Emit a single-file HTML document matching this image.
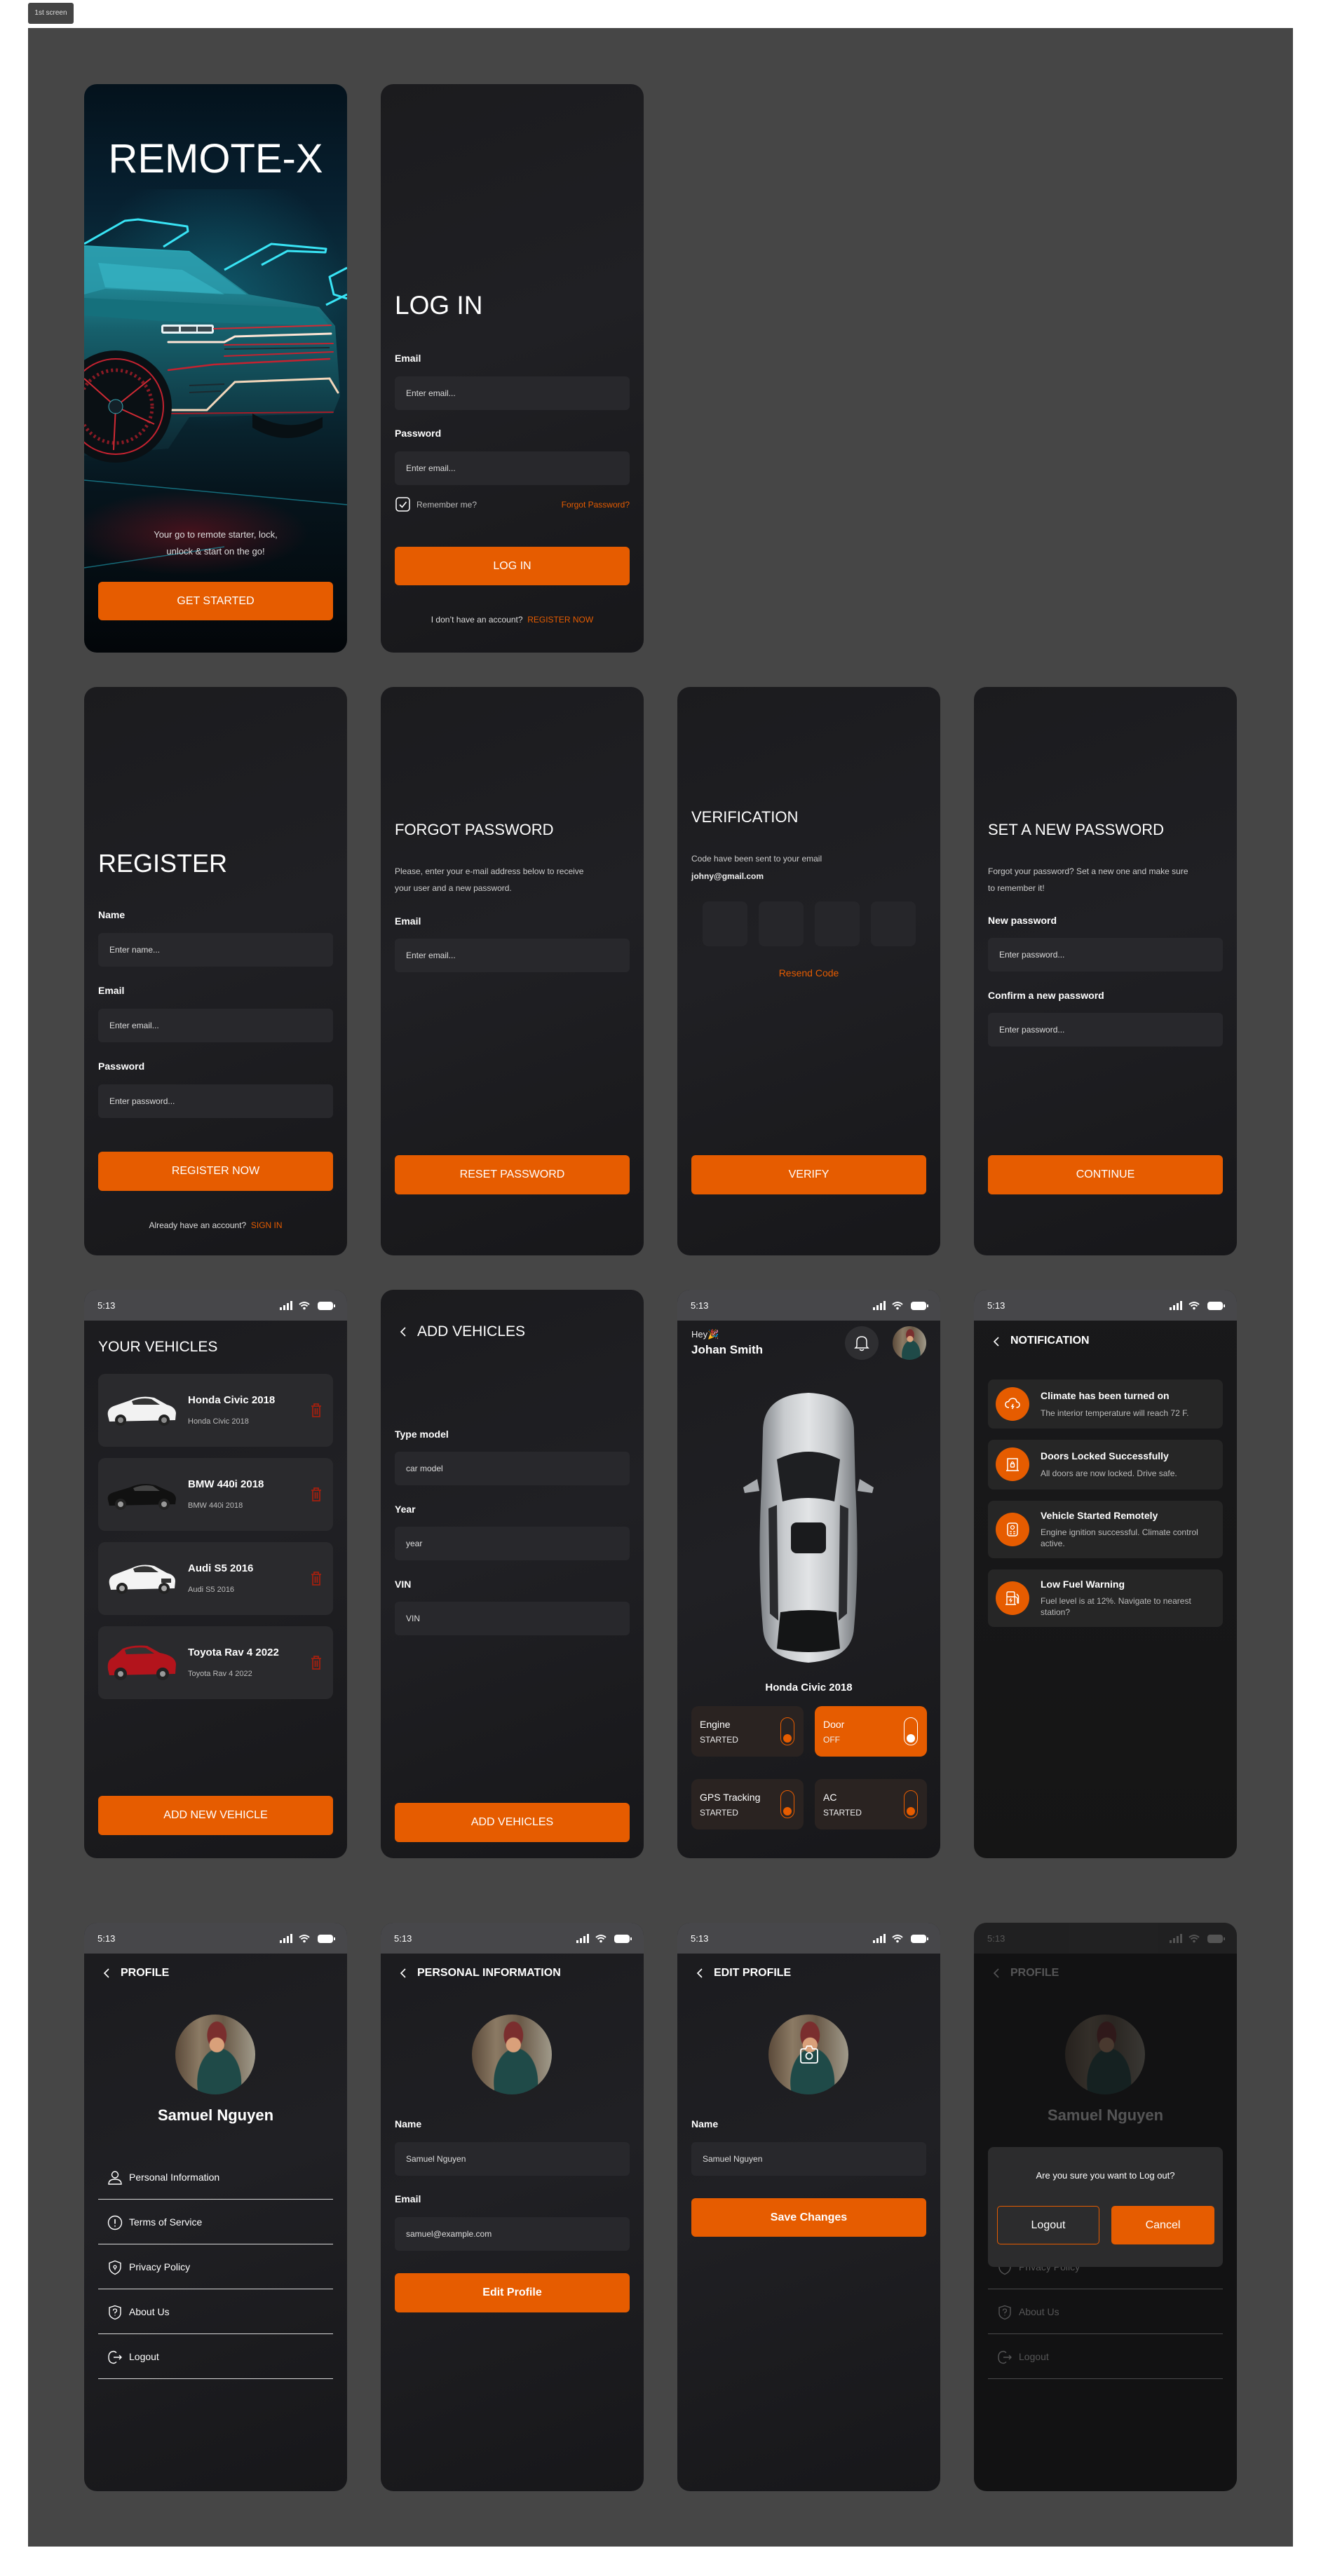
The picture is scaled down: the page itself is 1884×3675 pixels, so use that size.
<!DOCTYPE html>
<html><head><meta charset="utf-8">
<style>
*{margin:0;padding:0;box-sizing:border-box}
body{width:1884px;height:3675px;background:#fff;font-family:"Liberation Sans",Arial,sans-serif;position:relative;overflow:hidden}
#bg{position:absolute;left:40px;top:40px;width:1804px;height:3593px;background:#464646}
#lbl{position:absolute;left:40px;top:4px;width:65px;height:30px;background:#444;border-radius:3px;color:#ddd;font-size:10px;line-height:30px;text-align:center}
.ph{position:absolute;width:375px;height:811px;border-radius:18px;overflow:hidden;background:linear-gradient(160deg,#1b1b1e 0%,#202024 45%,#1b1b1e 75%,#17171a 100%);color:#fff}
.t{position:absolute;white-space:nowrap;line-height:1}
.lb{position:absolute;left:20px;font-size:14px;font-weight:bold;color:#fff;line-height:1}
.in{position:absolute;left:20px;width:335px;height:48px;background:#28282c;border-radius:6px;color:#ddd;font-size:12px;line-height:48px;padding-left:16px}
.bt{position:absolute;left:20px;width:335px;height:56px;background:#e65c00;border-radius:6px;color:#fff;font-size:16px;text-align:center;line-height:56px}
.sb{position:absolute;left:0;top:0;width:375px;height:44px;background:#47474a}
.sb .tm{position:absolute;left:19px;top:16px;font-size:13px;color:#fff}
.sb svg{position:absolute;left:276px;top:14px}
.card{position:absolute;left:20px;width:335px;height:104px;background:#2a2a2d;border-radius:10px}
.card .n{position:absolute;left:128px;top:30px;font-size:15px;font-weight:bold;color:#fff}
.card .s{position:absolute;left:128px;top:63px;font-size:11px;color:#bbb}
.card svg.tr{position:absolute;left:302px;top:41px}
.card svg.car{position:absolute;left:10px;top:22px}
.tile{position:absolute;width:160px;height:72px;border-radius:10px;background:#2a2321}
.tile .a{position:absolute;left:12px;top:19px;font-size:14px;color:#fff}
.tile .b{position:absolute;left:12px;top:42px;font-size:12px;color:#eee}
.tile .tg{position:absolute;left:127px;top:16px;width:20px;height:40px;border:1.5px solid #e65c00;border-radius:10px}
.tile .tg i{position:absolute;left:2.5px;bottom:3px;width:12px;height:12px;border-radius:50%;background:#e65c00}
.nc{position:absolute;left:20px;width:335px;background:#262626;border-radius:8px}
.nc .ic{position:absolute;left:11px;width:48px;height:48px;border-radius:50%;background:#e65c00}
.nc .ic svg{position:absolute;left:12px;top:12px}
.nc .h{position:absolute;left:75px;font-size:14px;color:#fff;font-weight:bold}
.nc .d{position:absolute;left:75px;font-size:12px;color:#bbb;line-height:16px;white-space:normal;width:255px}
.av{position:absolute;width:114px;height:114px;border-radius:50%;overflow:hidden;background:radial-gradient(circle at 52% 38%,#d9a07a 0 11%,transparent 12%),radial-gradient(ellipse at 52% 26%,#7a2e2e 0 16%,transparent 17%),radial-gradient(ellipse at 55% 85%,#1f4a48 0 35%,transparent 36%),linear-gradient(90deg,#5b4a3a,#8b7a64 30%,#6a5a48 60%,#a09a8a)}
.mi{position:absolute;left:20px;width:335px;height:64px;border-bottom:1px solid #d8d8d8}
.mi .x{position:absolute;left:44px;top:25px;font-size:14px;color:#fff}
.mi svg{position:absolute;left:13px;top:22px}
.hd{position:absolute;left:0;top:0;width:375px}
.hd svg{position:absolute;left:26px}
.hd .t{left:52px;font-size:16px;font-weight:bold}
</style></head><body>
<div id="lbl">1st screen</div>
<div id="bg"></div>

<!-- ROW 1 -->
<div class="ph" style="left:120px;top:120px;background:linear-gradient(180deg,#04121c 0%,#072030 20%,#0b3342 38%,#0a2a36 55%,#06141c 72%,#030609 100%)">
<svg width="375" height="811" style="position:absolute;left:0;top:0">
<defs>
<radialGradient id="gl" cx="50%" cy="40%" r="50%"><stop offset="0" stop-color="#1aa0b8" stop-opacity=".35"/><stop offset="1" stop-color="#1aa0b8" stop-opacity="0"/></radialGradient>
<linearGradient id="bd" x1="0" y1="0" x2="0" y2="1"><stop offset="0" stop-color="#2aa8b8"/><stop offset=".4" stop-color="#16606c"/><stop offset="1" stop-color="#0c2630"/></linearGradient>
<radialGradient id="rf" cx="50%" cy="50%" r="50%"><stop offset="0" stop-color="#7a1420" stop-opacity=".55"/><stop offset="1" stop-color="#7a1420" stop-opacity="0"/></radialGradient>
</defs>
<rect x="0" y="150" width="375" height="380" fill="url(#gl)"/>
<g fill="none" stroke="#39e4f5" stroke-width="3" stroke-linejoin="round">
<polyline points="0,228 58,195 77,193 147,203 148,210 113,232"/>
<polyline points="200,265 267,228 345,235 344,240 290,238 253,258"/>
<polyline points="375,262 350,275 356,300 375,306"/>
<polyline points="345,315 375,300"/>
</g>
<ellipse cx="150" cy="640" rx="170" ry="60" fill="url(#rf)"/>
<path d="M0,230 L150,238 L235,300 L335,318 L358,345 L365,445 L355,470 L150,475 L120,520 L0,530 Z" fill="url(#bd)"/>
<path d="M0,232 L150,240 L232,300 L30,292 L0,300 Z" fill="#2a9aaa" opacity=".85"/>
<path d="M20,255 L140,265 L200,300 L30,290Z" fill="#3cc0cf" opacity=".5"/>
<path d="M0,305 L330,320 L350,345 L110,338 L0,330Z" fill="#15707c"/>
<rect x="110" y="343" width="75" height="13" rx="3" fill="#e8f4f6"/>
<rect x="113" y="346" width="22" height="7" fill="#3a4a50"/><rect x="138" y="346" width="22" height="7" fill="#3a4a50"/><rect x="162" y="346" width="20" height="7" fill="#3a4a50"/>
<g fill="none" stroke-linecap="round">
<path d="M120,368 L200,368 L215,360 L352,356" stroke="#ffe6d6" stroke-width="3"/>
<path d="M185,349 L352,344" stroke="#d12a34" stroke-width="2"/>
<path d="M200,372 L355,370" stroke="#c42230" stroke-width="2"/>
<path d="M200,388 L355,382" stroke="#c42230" stroke-width="2"/>
<path d="M120,408 L185,400 L350,392" stroke="#c42230" stroke-width="2.5"/>
<path d="M115,465 L175,465 L215,425 L350,420 L362,440" stroke="#f3d7bb" stroke-width="3"/>
<path d="M120,470 L355,468" stroke="#a51c28" stroke-width="2"/>
</g>
<g stroke="#1b2a30" stroke-width="2"><line x1="200" y1="378" x2="350" y2="376"/><line x1="150" y1="430" x2="200" y2="428"/><line x1="150" y1="440" x2="195" y2="438"/></g>
<path d="M240,470 Q290,500 340,475 L340,490 Q290,520 240,490Z" fill="#081014"/>
<circle cx="45" cy="460" r="80" fill="#0a1014"/>
<circle cx="45" cy="460" r="68" fill="none" stroke="#c42230" stroke-width="2"/>
<circle cx="45" cy="460" r="52" fill="none" stroke="#8a1a24" stroke-width="5" stroke-dasharray="3 4"/>
<g stroke="#d12a34" stroke-width="2"><line x1="45" y1="460" x2="95" y2="420"/><line x1="45" y1="460" x2="100" y2="485"/><line x1="45" y1="460" x2="42" y2="522"/><line x1="45" y1="460" x2="0" y2="420"/></g>
<circle cx="45" cy="460" r="10" fill="#132028" stroke="#39a9b8"/>
<g stroke="#1fa8bc" stroke-width="1.5" opacity=".6"><line x1="0" y1="565" x2="375" y2="600"/><line x1="0" y1="690" x2="200" y2="660"/></g>
</svg>
<div class="t" style="left:0;width:375px;text-align:center;top:78px;font-size:58px;font-weight:normal;color:#fff">REMOTE-X</div>
<div class="t" style="left:0;width:375px;text-align:center;top:636px;font-size:13px;color:#ddd">Your go to remote starter, lock,</div>
<div class="t" style="left:0;width:375px;text-align:center;top:660px;font-size:13px;color:#ddd">unlock &amp; start on the go!</div>
<div class="bt" style="top:710px;height:55px;line-height:55px">GET STARTED</div>
</div>

<div class="ph" style="left:543px;top:120px">
<div class="t" style="left:20px;top:297px;font-size:37px">LOG IN</div>
<div class="lb" style="top:384px">Email</div>
<div class="in" style="top:417px">Enter email...</div>
<div class="lb" style="top:491px">Password</div>
<div class="in" style="top:524px">Enter email...</div>
<svg width="22" height="22" style="position:absolute;left:21px;top:589px"><rect x="1" y="1" width="19" height="19" rx="4" fill="none" stroke="#fff" stroke-width="1.5"/><path d="M6,11 L9.5,14.5 L15.5,7" fill="none" stroke="#fff" stroke-width="1.6"/></svg>
<div class="t" style="left:51px;top:594px;font-size:12px;color:#bbb">Remember me?</div>
<div class="t" style="right:20px;top:594px;font-size:12px;color:#e65c00">Forgot Password?</div>
<div class="bt" style="top:660px;height:55px;line-height:55px">LOG IN</div>
<div class="t" style="left:0;width:375px;text-align:center;top:758px;font-size:12px;color:#ddd">I don’t have an account?&nbsp;&nbsp;<span style="color:#e65c00">REGISTER NOW</span></div>
</div>

<!-- ROW 2 -->
<div class="ph" style="left:120px;top:980px">
<div class="t" style="left:20px;top:234px;font-size:36px">REGISTER</div>
<div class="lb" style="top:318px">Name</div>
<div class="in" style="top:351px">Enter name...</div>
<div class="lb" style="top:426px">Email</div>
<div class="in" style="top:459px">Enter email...</div>
<div class="lb" style="top:534px">Password</div>
<div class="in" style="top:567px">Enter password...</div>
<div class="bt" style="top:663px">REGISTER NOW</div>
<div class="t" style="left:0;width:375px;text-align:center;top:762px;font-size:12px;color:#ddd">Already have an account?&nbsp;&nbsp;<span style="color:#e65c00">SIGN IN</span></div>
</div>

<div class="ph" style="left:543px;top:980px">
<div class="t" style="left:20px;top:193px;font-size:22px">FORGOT PASSWORD</div>
<div class="t" style="left:20px;top:257px;font-size:12px;color:#ccc">Please, enter your e-mail address below to receive</div>
<div class="t" style="left:20px;top:281px;font-size:12px;color:#ccc">your user and a new password.</div>
<div class="lb" style="top:327px">Email</div>
<div class="in" style="top:359px">Enter email...</div>
<div class="bt" style="top:668px">RESET PASSWORD</div>
</div>

<div class="ph" style="left:966px;top:980px">
<div class="t" style="left:20px;top:175px;font-size:22px">VERIFICATION</div>
<div class="t" style="left:20px;top:239px;font-size:12px;color:#ccc">Code have been sent to your email</div>
<div class="t" style="left:20px;top:264px;font-size:12px;color:#eee;font-weight:bold">johny@gmail.com</div>
<div style="position:absolute;left:36px;top:306px;width:64px;height:64px;border-radius:8px;background:#26262a"></div>
<div style="position:absolute;left:116px;top:306px;width:64px;height:64px;border-radius:8px;background:#26262a"></div>
<div style="position:absolute;left:196px;top:306px;width:64px;height:64px;border-radius:8px;background:#26262a"></div>
<div style="position:absolute;left:276px;top:306px;width:64px;height:64px;border-radius:8px;background:#26262a"></div>
<div class="t" style="left:0;width:375px;text-align:center;top:401px;font-size:14px;color:#e65c00">Resend Code</div>
<div class="bt" style="top:668px">VERIFY</div>
</div>

<div class="ph" style="left:1389px;top:980px">
<div class="t" style="left:20px;top:193px;font-size:22px">SET A NEW PASSWORD</div>
<div class="t" style="left:20px;top:257px;font-size:12px;color:#ccc">Forgot your password? Set a new one and make sure</div>
<div class="t" style="left:20px;top:281px;font-size:12px;color:#ccc">to remember it!</div>
<div class="lb" style="top:326px">New password</div>
<div class="in" style="top:358px">Enter password...</div>
<div class="lb" style="top:433px">Confirm a new password</div>
<div class="in" style="top:465px">Enter password...</div>
<div class="bt" style="top:668px">CONTINUE</div>
</div>

<!-- ROW 3 -->
<div class="ph" style="left:120px;top:1840px">
<div class="sb"><span class="t tm">5:13</span><svg width="82" height="18"><rect x="3" y="11" width="3" height="4" fill="#fff"/><rect x="8" y="8" width="3" height="7" fill="#fff"/><rect x="13" y="5" width="3" height="10" fill="#fff"/><rect x="18" y="2" width="3" height="13" fill="#fff"/><path d="M31,7 Q38,1 45,7 M33.5,9.5 Q38,5.5 42.5,9.5" fill="none" stroke="#fff" stroke-width="2"/><circle cx="38" cy="12.5" r="1.8" fill="#fff"/><rect x="57" y="3" width="22" height="12" rx="4" fill="#fff"/><rect x="80" y="7" width="2" height="4" fill="#fff"/></svg></div>
<div class="t" style="left:20px;top:71px;font-size:21px">YOUR VEHICLES</div>
<div class="card" style="top:120px"><svg class="car" width="105" height="60"><path d="M4,38 Q2,28 12,24 L35,16 Q50,8 70,12 L88,22 Q100,25 101,34 L100,44 L6,46Z" fill="#f2f2f2"/><path d="M38,17 Q52,11 66,14 L78,22 L40,22Z" fill="#333"/><circle cx="22" cy="44" r="8" fill="#222"/><circle cx="22" cy="44" r="4" fill="#888"/><circle cx="84" cy="44" r="8" fill="#222"/><circle cx="84" cy="44" r="4" fill="#888"/></svg><div class="t n">Honda Civic 2018</div><div class="t s">Honda Civic 2018</div><svg class="tr" width="18" height="22"><path d="M2,5 H16 M6,5 V2 H12 V5 M4,5 V20 H14 V5 M7.5,8 V17 M10.5,8 V17" fill="none" stroke="#a3200f" stroke-width="1.8"/></svg></div>
<div class="card" style="top:240px"><svg class="car" width="105" height="60"><path d="M4,38 Q2,30 12,27 L35,20 Q52,12 72,17 L90,25 Q100,28 101,36 L100,44 L6,46Z" fill="#111"/><path d="M40,21 Q54,15 68,18 L78,25 L42,25Z" fill="#444"/><circle cx="22" cy="44" r="8" fill="#222"/><circle cx="22" cy="44" r="4" fill="#999"/><circle cx="84" cy="44" r="8" fill="#222"/><circle cx="84" cy="44" r="4" fill="#999"/></svg><div class="t n">BMW 440i 2018</div><div class="t s">BMW 440i 2018</div><svg class="tr" width="18" height="22"><path d="M2,5 H16 M6,5 V2 H12 V5 M4,5 V20 H14 V5 M7.5,8 V17 M10.5,8 V17" fill="none" stroke="#a3200f" stroke-width="1.8"/></svg></div>
<div class="card" style="top:360px"><svg class="car" width="105" height="60"><path d="M6,38 Q4,28 14,24 L38,15 Q52,8 70,12 L88,22 Q100,25 100,34 L99,44 L8,46Z" fill="#f4f4f4"/><path d="M40,16 Q54,10 66,14 L76,21 L42,21Z" fill="#333"/><rect x="80" y="30" width="14" height="6" fill="#333"/><circle cx="24" cy="44" r="8" fill="#222"/><circle cx="24" cy="44" r="4" fill="#aaa"/><circle cx="84" cy="44" r="8" fill="#222"/><circle cx="84" cy="44" r="4" fill="#aaa"/></svg><div class="t n">Audi S5 2016</div><div class="t s">Audi S5 2016</div><svg class="tr" width="18" height="22"><path d="M2,5 H16 M6,5 V2 H12 V5 M4,5 V20 H14 V5 M7.5,8 V17 M10.5,8 V17" fill="none" stroke="#a3200f" stroke-width="1.8"/></svg></div>
<div class="card" style="top:480px"><svg class="car" width="105" height="60"><path d="M4,40 Q2,26 12,22 L25,10 Q40,4 60,6 L78,16 Q100,20 101,32 L100,46 L6,48Z" fill="#b3141c"/><path d="M28,12 Q42,7 58,9 L70,17 L30,18Z" fill="#333"/><circle cx="22" cy="46" r="9" fill="#222"/><circle cx="22" cy="46" r="4" fill="#999"/><circle cx="82" cy="46" r="9" fill="#222"/><circle cx="82" cy="46" r="4" fill="#999"/></svg><div class="t n">Toyota Rav 4 2022</div><div class="t s">Toyota Rav 4 2022</div><svg class="tr" width="18" height="22"><path d="M2,5 H16 M6,5 V2 H12 V5 M4,5 V20 H14 V5 M7.5,8 V17 M10.5,8 V17" fill="none" stroke="#a3200f" stroke-width="1.8"/></svg></div>
<div class="bt" style="top:722px">ADD NEW VEHICLE</div>
</div>

<div class="ph" style="left:543px;top:1840px">
<div class="hd"><svg width="12" height="16" style="top:52px"><path d="M9,2 L3,8 L9,14" fill="none" stroke="#fff" stroke-width="1.6"/></svg><div class="t" style="top:49px;font-size:21px;font-weight:normal">ADD VEHICLES</div></div>
<div class="lb" style="top:199px">Type model</div>
<div class="in" style="top:231px">car model</div>
<div class="lb" style="top:306px">Year</div>
<div class="in" style="top:338px">year</div>
<div class="lb" style="top:413px">VIN</div>
<div class="in" style="top:445px">VIN</div>
<div class="bt" style="top:732px">ADD VEHICLES</div>
</div>

<div class="ph" style="left:966px;top:1840px">
<div class="sb"><span class="t tm">5:13</span><svg width="82" height="18"><rect x="3" y="11" width="3" height="4" fill="#fff"/><rect x="8" y="8" width="3" height="7" fill="#fff"/><rect x="13" y="5" width="3" height="10" fill="#fff"/><rect x="18" y="2" width="3" height="13" fill="#fff"/><path d="M31,7 Q38,1 45,7 M33.5,9.5 Q38,5.5 42.5,9.5" fill="none" stroke="#fff" stroke-width="2"/><circle cx="38" cy="12.5" r="1.8" fill="#fff"/><rect x="57" y="3" width="22" height="12" rx="4" fill="#fff"/><rect x="80" y="7" width="2" height="4" fill="#fff"/></svg></div>
<div class="t" style="left:20px;top:57px;font-size:13px;color:#eee">Hey🎉</div>
<div class="t" style="left:20px;top:77px;font-size:17px;font-weight:bold">Johan Smith</div>
<div style="position:absolute;left:239px;top:52px;width:48px;height:48px;border-radius:50%;background:#2e2e31"></div>
<svg width="22" height="24" style="position:absolute;left:252px;top:64px"><path d="M4,17 V10 Q4,3 11,3 Q18,3 18,10 V17 L20,19 H2Z M8,21 Q11,24 14,21" fill="none" stroke="#fff" stroke-width="1.5"/></svg>
<div class="av" style="left:307px;top:52px;width:48px;height:48px"></div>
<svg width="190" height="395" style="position:absolute;left:92px;top:142px">
<defs><linearGradient id="sv" x1="0" x2="1"><stop offset="0" stop-color="#7d8186"/><stop offset=".25" stop-color="#c8cbce"/><stop offset=".5" stop-color="#e2e4e6"/><stop offset=".75" stop-color="#c3c6c9"/><stop offset="1" stop-color="#74787c"/></linearGradient></defs>
<path d="M30,60 Q30,8 95,5 Q160,8 160,60 L162,140 Q168,250 160,340 Q158,385 95,390 Q32,385 30,340 Q22,250 28,140Z" fill="url(#sv)"/>
<path d="M2,140 L22,128 L25,145 L4,148Z M188,140 L168,128 L165,145 L186,148Z" fill="#a7aaae"/>
<path d="M50,100 Q95,78 140,100 L132,160 Q95,150 58,160Z" fill="#1e1f22"/>
<rect x="70" y="190" width="50" height="44" rx="8" fill="#1a1b1d"/>
<path d="M38,170 L50,165 L52,330 L40,320Z M152,170 L140,165 L138,330 L150,320Z" fill="#2a2b2e"/>
<path d="M55,318 Q95,312 135,318 L140,370 Q95,380 50,370Z" fill="#141516"/>
</svg>
<div class="t" style="left:0;width:375px;text-align:center;top:560px;font-size:15px;font-weight:bold">Honda Civic 2018</div>
<div class="tile" style="left:20px;top:594px"><div class="t a">Engine</div><div class="t b">STARTED</div><div class="tg"><i></i></div></div>
<div class="tile" style="left:196px;top:594px;background:#e65c00"><div class="t a">Door</div><div class="t b">OFF</div><div class="tg" style="border-color:#fff"><i style="background:#fff"></i></div></div>
<div class="tile" style="left:20px;top:698px"><div class="t a">GPS Tracking</div><div class="t b">STARTED</div><div class="tg"><i></i></div></div>
<div class="tile" style="left:196px;top:698px"><div class="t a">AC</div><div class="t b">STARTED</div><div class="tg"><i></i></div></div>
</div>

<div class="ph" style="left:1389px;top:1840px;background:linear-gradient(180deg,#19191b,#151515)">
<div class="sb"><span class="t tm">5:13</span><svg width="82" height="18"><rect x="3" y="11" width="3" height="4" fill="#fff"/><rect x="8" y="8" width="3" height="7" fill="#fff"/><rect x="13" y="5" width="3" height="10" fill="#fff"/><rect x="18" y="2" width="3" height="13" fill="#fff"/><path d="M31,7 Q38,1 45,7 M33.5,9.5 Q38,5.5 42.5,9.5" fill="none" stroke="#fff" stroke-width="2"/><circle cx="38" cy="12.5" r="1.8" fill="#fff"/><rect x="57" y="3" width="22" height="12" rx="4" fill="#fff"/><rect x="80" y="7" width="2" height="4" fill="#fff"/></svg></div>
<div class="hd"><svg width="12" height="16" style="top:66px"><path d="M9,2 L3,8 L9,14" fill="none" stroke="#fff" stroke-width="1.6"/></svg><div class="t" style="top:65px">NOTIFICATION</div></div>
<div class="nc" style="top:128px;height:70px"><div class="ic" style="top:11px"><svg width="24" height="24"><path d="M7,17 Q2,17 2,12.5 Q2,8.5 6.5,8.5 Q8,4 12.5,4 Q17.5,4 18,9 Q22,9.5 22,13 Q22,17 17.5,17 M13,12 L11,15.5 H13.5 L11.5,19" fill="none" stroke="#fff" stroke-width="1.5"/></svg></div><div class="t h" style="top:16px">Climate has been turned on</div><div class="t d" style="top:40px">The interior temperature will reach 72 F.</div></div>
<div class="nc" style="top:214px;height:71px"><div class="ic" style="top:11px"><svg width="24" height="24"><path d="M5,21 V4 H19 V21 M3,21 H21" fill="none" stroke="#fff" stroke-width="1.5"/><rect x="9.5" y="11" width="5" height="5" rx="1" fill="none" stroke="#fff" stroke-width="1.4"/><path d="M10.5,11 V9.5 Q12,7.5 13.5,9.5 V11" fill="none" stroke="#fff" stroke-width="1.3"/></svg></div><div class="t h" style="top:16px">Doors Locked Successfully</div><div class="t d" style="top:40px">All doors are now locked. Drive safe.</div></div>
<div class="nc" style="top:301px;height:82px"><div class="ic" style="top:17px"><svg width="24" height="24"><rect x="5" y="3" width="14" height="18" rx="3" fill="none" stroke="#fff" stroke-width="1.5"/><circle cx="12" cy="9" r="2.5" fill="none" stroke="#fff" stroke-width="1.3"/><path d="M8,15 H11 M13,15 H16 M8,18 H11 M13,18 H16" stroke="#fff" stroke-width="1.3"/></svg></div><div class="t h" style="top:14px">Vehicle Started Remotely</div><div class="t d" style="top:37px">Engine ignition successful. Climate control active.</div></div>
<div class="nc" style="top:399px;height:82px"><div class="ic" style="top:17px"><svg width="24" height="24"><path d="M4,21 V5 Q4,3 6,3 H13 Q15,3 15,5 V21 M2,21 H17 M15,9 L19,12 V18 Q19,19.5 20.5,19 V9 L18,6 M4,10 H15" fill="none" stroke="#fff" stroke-width="1.4"/><path d="M10,12 L8,15 H11 L9,18" fill="none" stroke="#fff" stroke-width="1.2"/></svg></div><div class="t h" style="top:14px">Low Fuel Warning</div><div class="t d" style="top:37px">Fuel level is at 12%. Navigate to nearest station?</div></div>
</div>

<!-- ROW 4 -->
<div class="ph" style="left:120px;top:2743px">
<div class="sb"><span class="t tm">5:13</span><svg width="82" height="18"><rect x="3" y="11" width="3" height="4" fill="#fff"/><rect x="8" y="8" width="3" height="7" fill="#fff"/><rect x="13" y="5" width="3" height="10" fill="#fff"/><rect x="18" y="2" width="3" height="13" fill="#fff"/><path d="M31,7 Q38,1 45,7 M33.5,9.5 Q38,5.5 42.5,9.5" fill="none" stroke="#fff" stroke-width="2"/><circle cx="38" cy="12.5" r="1.8" fill="#fff"/><rect x="57" y="3" width="22" height="12" rx="4" fill="#fff"/><rect x="80" y="7" width="2" height="4" fill="#fff"/></svg></div>
<div class="hd"><svg width="12" height="16" style="top:64px"><path d="M9,2 L3,8 L9,14" fill="none" stroke="#fff" stroke-width="1.6"/></svg><div class="t" style="top:64px">PROFILE</div></div>
<div class="av" style="left:130px;top:131px"></div>
<div class="t" style="left:0;width:375px;text-align:center;top:264px;font-size:22px;font-weight:bold">Samuel Nguyen</div>
<div class="mi" style="top:331px"><svg width="22" height="22"><circle cx="11" cy="6.5" r="4.5" fill="none" stroke="#fff" stroke-width="1.4"/><path d="M2,20 Q2,13 11,13 Q20,13 20,20Z" fill="none" stroke="#fff" stroke-width="1.4"/></svg><div class="t x">Personal Information</div></div>
<div class="mi" style="top:395px"><svg width="22" height="22"><circle cx="11" cy="11" r="9.5" fill="none" stroke="#fff" stroke-width="1.4"/><path d="M11,6 V12.5 M11,15 V16.5" stroke="#fff" stroke-width="1.6"/></svg><div class="t x">Terms of Service</div></div>
<div class="mi" style="top:459px"><svg width="22" height="22"><path d="M11,1.5 L19,4.5 V10 Q19,17 11,20.5 Q3,17 3,10 V4.5Z" fill="none" stroke="#fff" stroke-width="1.4"/><circle cx="11" cy="10" r="2" fill="none" stroke="#fff" stroke-width="1.3"/><path d="M11,12 V14.5" stroke="#fff" stroke-width="1.3"/></svg><div class="t x">Privacy Policy</div></div>
<div class="mi" style="top:523px"><svg width="22" height="22"><path d="M11,1.5 L19,4 V12 Q19,18 11,20.5 Q3,18 3,12 V4Z" fill="none" stroke="#fff" stroke-width="1.4"/><path d="M8.5,8.5 Q8.5,6 11,6 Q13.5,6 13.5,8.5 Q13.5,10 11,11 V12.5 M11,14.5 V15.5" fill="none" stroke="#fff" stroke-width="1.3"/></svg><div class="t x">About Us</div></div>
<div class="mi" style="top:587px"><svg width="22" height="22"><path d="M13,4.5 Q11,2.5 9,2.5 Q2,3 2,11 Q2,19 9,19.5 Q11,19.5 13,17.5" fill="none" stroke="#fff" stroke-width="1.4"/><path d="M9,11 H20 M17,8 L20,11 L17,14" fill="none" stroke="#fff" stroke-width="1.4"/></svg><div class="t x">Logout</div></div>
</div>

<div class="ph" style="left:543px;top:2743px">
<div class="sb"><span class="t tm">5:13</span><svg width="82" height="18"><rect x="3" y="11" width="3" height="4" fill="#fff"/><rect x="8" y="8" width="3" height="7" fill="#fff"/><rect x="13" y="5" width="3" height="10" fill="#fff"/><rect x="18" y="2" width="3" height="13" fill="#fff"/><path d="M31,7 Q38,1 45,7 M33.5,9.5 Q38,5.5 42.5,9.5" fill="none" stroke="#fff" stroke-width="2"/><circle cx="38" cy="12.5" r="1.8" fill="#fff"/><rect x="57" y="3" width="22" height="12" rx="4" fill="#fff"/><rect x="80" y="7" width="2" height="4" fill="#fff"/></svg></div>
<div class="hd"><svg width="12" height="16" style="top:64px"><path d="M9,2 L3,8 L9,14" fill="none" stroke="#fff" stroke-width="1.6"/></svg><div class="t" style="top:64px">PERSONAL INFORMATION</div></div>
<div class="av" style="left:130px;top:131px"></div>
<div class="lb" style="top:280px">Name</div>
<div class="in" style="top:313px">Samuel Nguyen</div>
<div class="lb" style="top:387px">Email</div>
<div class="in" style="top:420px">samuel@example.com</div>
<div class="bt" style="top:500px;font-weight:bold">Edit Profile</div>
</div>

<div class="ph" style="left:966px;top:2743px">
<div class="sb"><span class="t tm">5:13</span><svg width="82" height="18"><rect x="3" y="11" width="3" height="4" fill="#fff"/><rect x="8" y="8" width="3" height="7" fill="#fff"/><rect x="13" y="5" width="3" height="10" fill="#fff"/><rect x="18" y="2" width="3" height="13" fill="#fff"/><path d="M31,7 Q38,1 45,7 M33.5,9.5 Q38,5.5 42.5,9.5" fill="none" stroke="#fff" stroke-width="2"/><circle cx="38" cy="12.5" r="1.8" fill="#fff"/><rect x="57" y="3" width="22" height="12" rx="4" fill="#fff"/><rect x="80" y="7" width="2" height="4" fill="#fff"/></svg></div>
<div class="hd"><svg width="12" height="16" style="top:64px"><path d="M9,2 L3,8 L9,14" fill="none" stroke="#fff" stroke-width="1.6"/></svg><div class="t" style="top:64px">EDIT PROFILE</div></div>
<div class="av" style="left:130px;top:131px"></div>
<svg width="30" height="28" style="position:absolute;left:173px;top:174px"><path d="M3,9 Q3,6 6,6 H10 L12,2 H18 L20,6 H24 Q27,6 27,9 V23 Q27,26 24,26 H6 Q3,26 3,23Z" fill="none" stroke="#fff" stroke-width="1.8"/><circle cx="15" cy="16" r="4.5" fill="none" stroke="#fff" stroke-width="1.8"/></svg>
<div class="lb" style="top:280px">Name</div>
<div class="in" style="top:313px">Samuel Nguyen</div>
<div class="bt" style="top:393px;height:55px;line-height:55px;font-weight:bold">Save Changes</div>
</div>

<div class="ph" style="left:1389px;top:2743px;background:#121213">
<div style="position:absolute;left:0;top:0;width:375px;height:811px;opacity:.28">
<div class="sb"><span class="t tm">5:13</span><svg width="82" height="18"><rect x="3" y="11" width="3" height="4" fill="#fff"/><rect x="8" y="8" width="3" height="7" fill="#fff"/><rect x="13" y="5" width="3" height="10" fill="#fff"/><rect x="18" y="2" width="3" height="13" fill="#fff"/><path d="M31,7 Q38,1 45,7 M33.5,9.5 Q38,5.5 42.5,9.5" fill="none" stroke="#fff" stroke-width="2"/><circle cx="38" cy="12.5" r="1.8" fill="#fff"/><rect x="57" y="3" width="22" height="12" rx="4" fill="#fff"/><rect x="80" y="7" width="2" height="4" fill="#fff"/></svg></div>
<div class="hd"><svg width="12" height="16" style="top:64px"><path d="M9,2 L3,8 L9,14" fill="none" stroke="#fff" stroke-width="1.6"/></svg><div class="t" style="top:64px">PROFILE</div></div>
<div class="av" style="left:130px;top:131px"></div>
<div class="t" style="left:0;width:375px;text-align:center;top:264px;font-size:22px;font-weight:bold">Samuel Nguyen</div>
<div class="mi" style="top:459px"><svg width="22" height="22"><path d="M11,1.5 L19,4.5 V10 Q19,17 11,20.5 Q3,17 3,10 V4.5Z" fill="none" stroke="#fff" stroke-width="1.4"/></svg><div class="t x">Privacy Policy</div></div>
<div class="mi" style="top:523px"><svg width="22" height="22"><path d="M11,1.5 L19,4 V12 Q19,18 11,20.5 Q3,18 3,12 V4Z" fill="none" stroke="#fff" stroke-width="1.4"/><path d="M8.5,8.5 Q8.5,6 11,6 Q13.5,6 13.5,8.5 Q13.5,10 11,11 V12.5 M11,14.5 V15.5" fill="none" stroke="#fff" stroke-width="1.3"/></svg><div class="t x">About Us</div></div>
<div class="mi" style="top:587px"><svg width="22" height="22"><path d="M13,4.5 Q11,2.5 9,2.5 Q2,3 2,11 Q2,19 9,19.5 Q11,19.5 13,17.5" fill="none" stroke="#fff" stroke-width="1.4"/><path d="M9,11 H20 M17,8 L20,11 L17,14" fill="none" stroke="#fff" stroke-width="1.4"/></svg><div class="t x">Logout</div></div>
</div>
<div style="position:absolute;left:20px;top:320px;width:335px;height:171px;background:#2c2c2d;border-radius:8px">
<div class="t" style="left:0;width:335px;text-align:center;top:34px;font-size:13px;color:#fff">Are you sure you want to Log out?</div>
<div style="position:absolute;left:13px;top:84px;width:146px;height:55px;border:1px solid #e65c00;border-radius:5px;color:#fff;font-size:16px;text-align:center;line-height:53px">Logout</div>
<div style="position:absolute;left:176px;top:84px;width:147px;height:55px;background:#e65c00;border-radius:5px;color:#fff;font-size:16px;text-align:center;line-height:55px">Cancel</div>
</div>
</div>
</body></html>
